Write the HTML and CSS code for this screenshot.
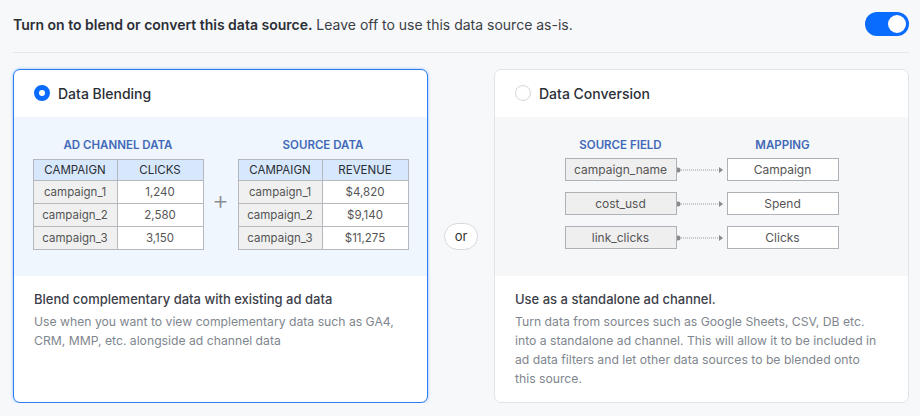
FILE: index.html
```html
<!DOCTYPE html>
<html lang="en">
<head>
    <meta charset="UTF-8">
    <meta name="viewport" content="width=device-width, initial-scale=1.0">
    <title>Data source mode</title>
    <link rel="stylesheet" href="styles.css">
</head>
<body>
    <div class="page">
        <div class="top-bar">
            <p class="intro"><strong>Turn on to blend or convert this data source.</strong> Leave off to use this data source as-is.</p>
            <button class="toggle on" aria-label="Enable"><span class="knob"></span></button>
        </div>

        <div class="options">
            <div class="option-card selected">
                <div class="card-head">
                    <span class="radio checked"></span>
                    <span class="card-title">Data Blending</span>
                </div>
                <div class="card-visual blend">
                    <div class="table-block">
                        <div class="visual-label">AD CHANNEL DATA</div>
                        <table class="mini-table">
                            <tr><th>CAMPAIGN</th><th>CLICKS</th></tr>
                            <tr><td class="key">campaign_1</td><td>1,240</td></tr>
                            <tr><td class="key">campaign_2</td><td>2,580</td></tr>
                            <tr><td class="key">campaign_3</td><td>3,150</td></tr>
                        </table>
                    </div>
                    <div class="plus">+</div>
                    <div class="table-block">
                        <div class="visual-label">SOURCE DATA</div>
                        <table class="mini-table">
                            <tr><th>CAMPAIGN</th><th>REVENUE</th></tr>
                            <tr><td class="key">campaign_1</td><td>$4,820</td></tr>
                            <tr><td class="key">campaign_2</td><td>$9,140</td></tr>
                            <tr><td class="key">campaign_3</td><td>$11,275</td></tr>
                        </table>
                    </div>
                </div>
                <div class="card-body">
                    <h3>Blend complementary data with existing ad data</h3>
                    <p>Use when you want to view complementary data such as GA4, CRM, MMP, etc. alongside ad channel data</p>
                </div>
            </div>

            <div class="or-col"><span class="or-pill">or</span></div>

            <div class="option-card">
                <div class="card-head">
                    <span class="radio"></span>
                    <span class="card-title">Data Conversion</span>
                </div>
                <div class="card-visual convert">
                    <div class="map">
                        <div class="map-row map-head">
                            <div class="visual-label">SOURCE FIELD</div>
                            <div class="visual-label">MAPPING</div>
                        </div>
                        <div class="map-row">
                            <div class="field src">campaign_name</div>
                            <svg class="link" width="50" height="10" viewBox="0 0 50 10"><circle cx="1" cy="5" r="2.5" fill="#888"/><line x1="4" y1="5" x2="42" y2="5" stroke="#999" stroke-width="1" stroke-dasharray="1 1"/><path d="M42 2 L46 5 L42 8 Z" fill="#888"/></svg>
                            <div class="field dst">Campaign</div>
                        </div>
                        <div class="map-row">
                            <div class="field src">cost_usd</div>
                            <svg class="link" width="50" height="10" viewBox="0 0 50 10"><circle cx="1" cy="5" r="2.5" fill="#888"/><line x1="4" y1="5" x2="42" y2="5" stroke="#999" stroke-width="1" stroke-dasharray="1 1"/><path d="M42 2 L46 5 L42 8 Z" fill="#888"/></svg>
                            <div class="field dst">Spend</div>
                        </div>
                        <div class="map-row">
                            <div class="field src">link_clicks</div>
                            <svg class="link" width="50" height="10" viewBox="0 0 50 10"><circle cx="1" cy="5" r="2.5" fill="#888"/><line x1="4" y1="5" x2="42" y2="5" stroke="#999" stroke-width="1" stroke-dasharray="1 1"/><path d="M42 2 L46 5 L42 8 Z" fill="#888"/></svg>
                            <div class="field dst">Clicks</div>
                        </div>
                    </div>
                </div>
                <div class="card-body">
                    <h3>Use as a standalone ad channel.</h3>
                    <p>Turn data from sources such as Google Sheets, CSV, DB etc. into a standalone ad channel. This will allow it to be included in ad data filters and let other data sources to be blended onto this source.</p>
                </div>
            </div>
        </div>
    </div>
</body>
</html>
```

FILE: styles.css
```css
* {
    box-sizing: border-box;
}
body {
    margin: 0;
    background-color: #f7f8fa;
    font-family: Inter, "Noto Sans", sans-serif;
    color: #2b2f36;
}
.page {
    padding: 12px 11px 0 13px;
}
.top-bar {
    display: flex;
    align-items: center;
    justify-content: space-between;
    padding-bottom: 16px;
    border-bottom: 1px solid #e3e6ea;
}
.intro {
    margin: 0;
    font-size: 14px;
    color: #3b3f46;
}
.intro strong {
    font-weight: 600;
    color: #2b2f36;
}
.toggle {
    width: 44px;
    height: 24px;
    border: none;
    border-radius: 12px;
    padding: 3px;
    background-color: #0a6cff;
    display: flex;
    justify-content: flex-end;
    cursor: pointer;
}
.toggle .knob {
    width: 18px;
    height: 18px;
    border-radius: 50%;
    background-color: #fff;
}
.options {
    display: flex;
    margin-top: 16px;
}
.option-card {
    width: 415px;
    height: 334px;
    background-color: #fff;
    border: 1px solid #e1e5ea;
    border-radius: 7px;
    overflow: hidden;
    display: flex;
    flex-direction: column;
}
.option-card.selected {
    border-color: #2b7ef2;
    box-shadow: 0 0 2px 1px rgba(43, 126, 242, 0.25);
}
.card-head {
    height: 47px;
    display: flex;
    align-items: center;
    gap: 8px;
    padding-left: 20px;
    padding-bottom: 1px;
}
.radio {
    width: 16px;
    height: 16px;
    border-radius: 50%;
    border: 1px solid #d3d6da;
    background-color: #fff;
}
.radio.checked {
    border: 5px solid #0a6cff;
}
.card-title {
    font-size: 14px;
    font-weight: 500;
    color: #2b2f36;
}
.card-visual {
    height: 159px;
    display: flex;
    justify-content: center;
    padding-top: 21px;
}
.card-visual.blend {
    background-color: #f0f6fd;
}
.card-visual.convert {
    background-color: #f6f7f9;
}
.visual-label {
    font-size: 11.5px;
    font-weight: 600;
    color: #4169b8;
    text-align: center;
    line-height: 14px;
    margin-bottom: 7px;
}
.mini-table {
    border-collapse: collapse;
    font-size: 11.5px;
    color: #555;
}
.mini-table th,
.mini-table td {
    border: 1px solid #b5b9bf;
    text-align: center;
    padding: 0;
}
.mini-table th {
    height: 21px;
    background-color: #d7e8fd;
    color: #2a2d33;
    font-weight: 400;
}
.mini-table td {
    height: 23px;
    background-color: #fff;
}
.mini-table th:first-child,
.mini-table td.key {
    width: 84px;
}
.mini-table th:last-child {
    width: 86px;
}
.mini-table td.key {
    background-color: #f0f0f0;
}
.plus {
    width: 34px;
    text-align: center;
    font-size: 26px;
    font-weight: 300;
    color: #8a8d92;
    padding-top: 46px;
}
.map-row {
    display: flex;
    align-items: center;
    margin-bottom: 11px;
}
.map-row.map-head {
    justify-content: space-between;
    margin-bottom: 6px;
}
.map-head .visual-label {
    width: 112px;
    margin: 0;
}
.field {
    width: 112px;
    height: 23px;
    border: 1px solid #aeb1b6;
    display: flex;
    align-items: center;
    justify-content: center;
    font-size: 12px;
    color: #555;
}
.field.src {
    background-color: #efefef;
}
.field.dst {
    background-color: #fff;
}
.link {
    display: block;
}
.or-col {
    width: 66px;
    display: flex;
    align-items: center;
    justify-content: center;
}
.or-pill {
    width: 34px;
    height: 27px;
    border: 1px solid #d5d8dc;
    border-radius: 14px;
    background-color: #fff;
    display: flex;
    align-items: center;
    justify-content: center;
    font-size: 13px;
    color: #333;
}
.card-body {
    padding: 14px 21px 0 20px;
}
.card-body h3 {
    margin: 0 0 4px;
    font-size: 13px;
    font-weight: 500;
    line-height: 18px;
    color: #3c4049;
}
.card-body p {
    margin: 0;
    max-width: 366px;
    font-size: 12.2px;
    line-height: 19px;
    color: #80868e;
}
```
